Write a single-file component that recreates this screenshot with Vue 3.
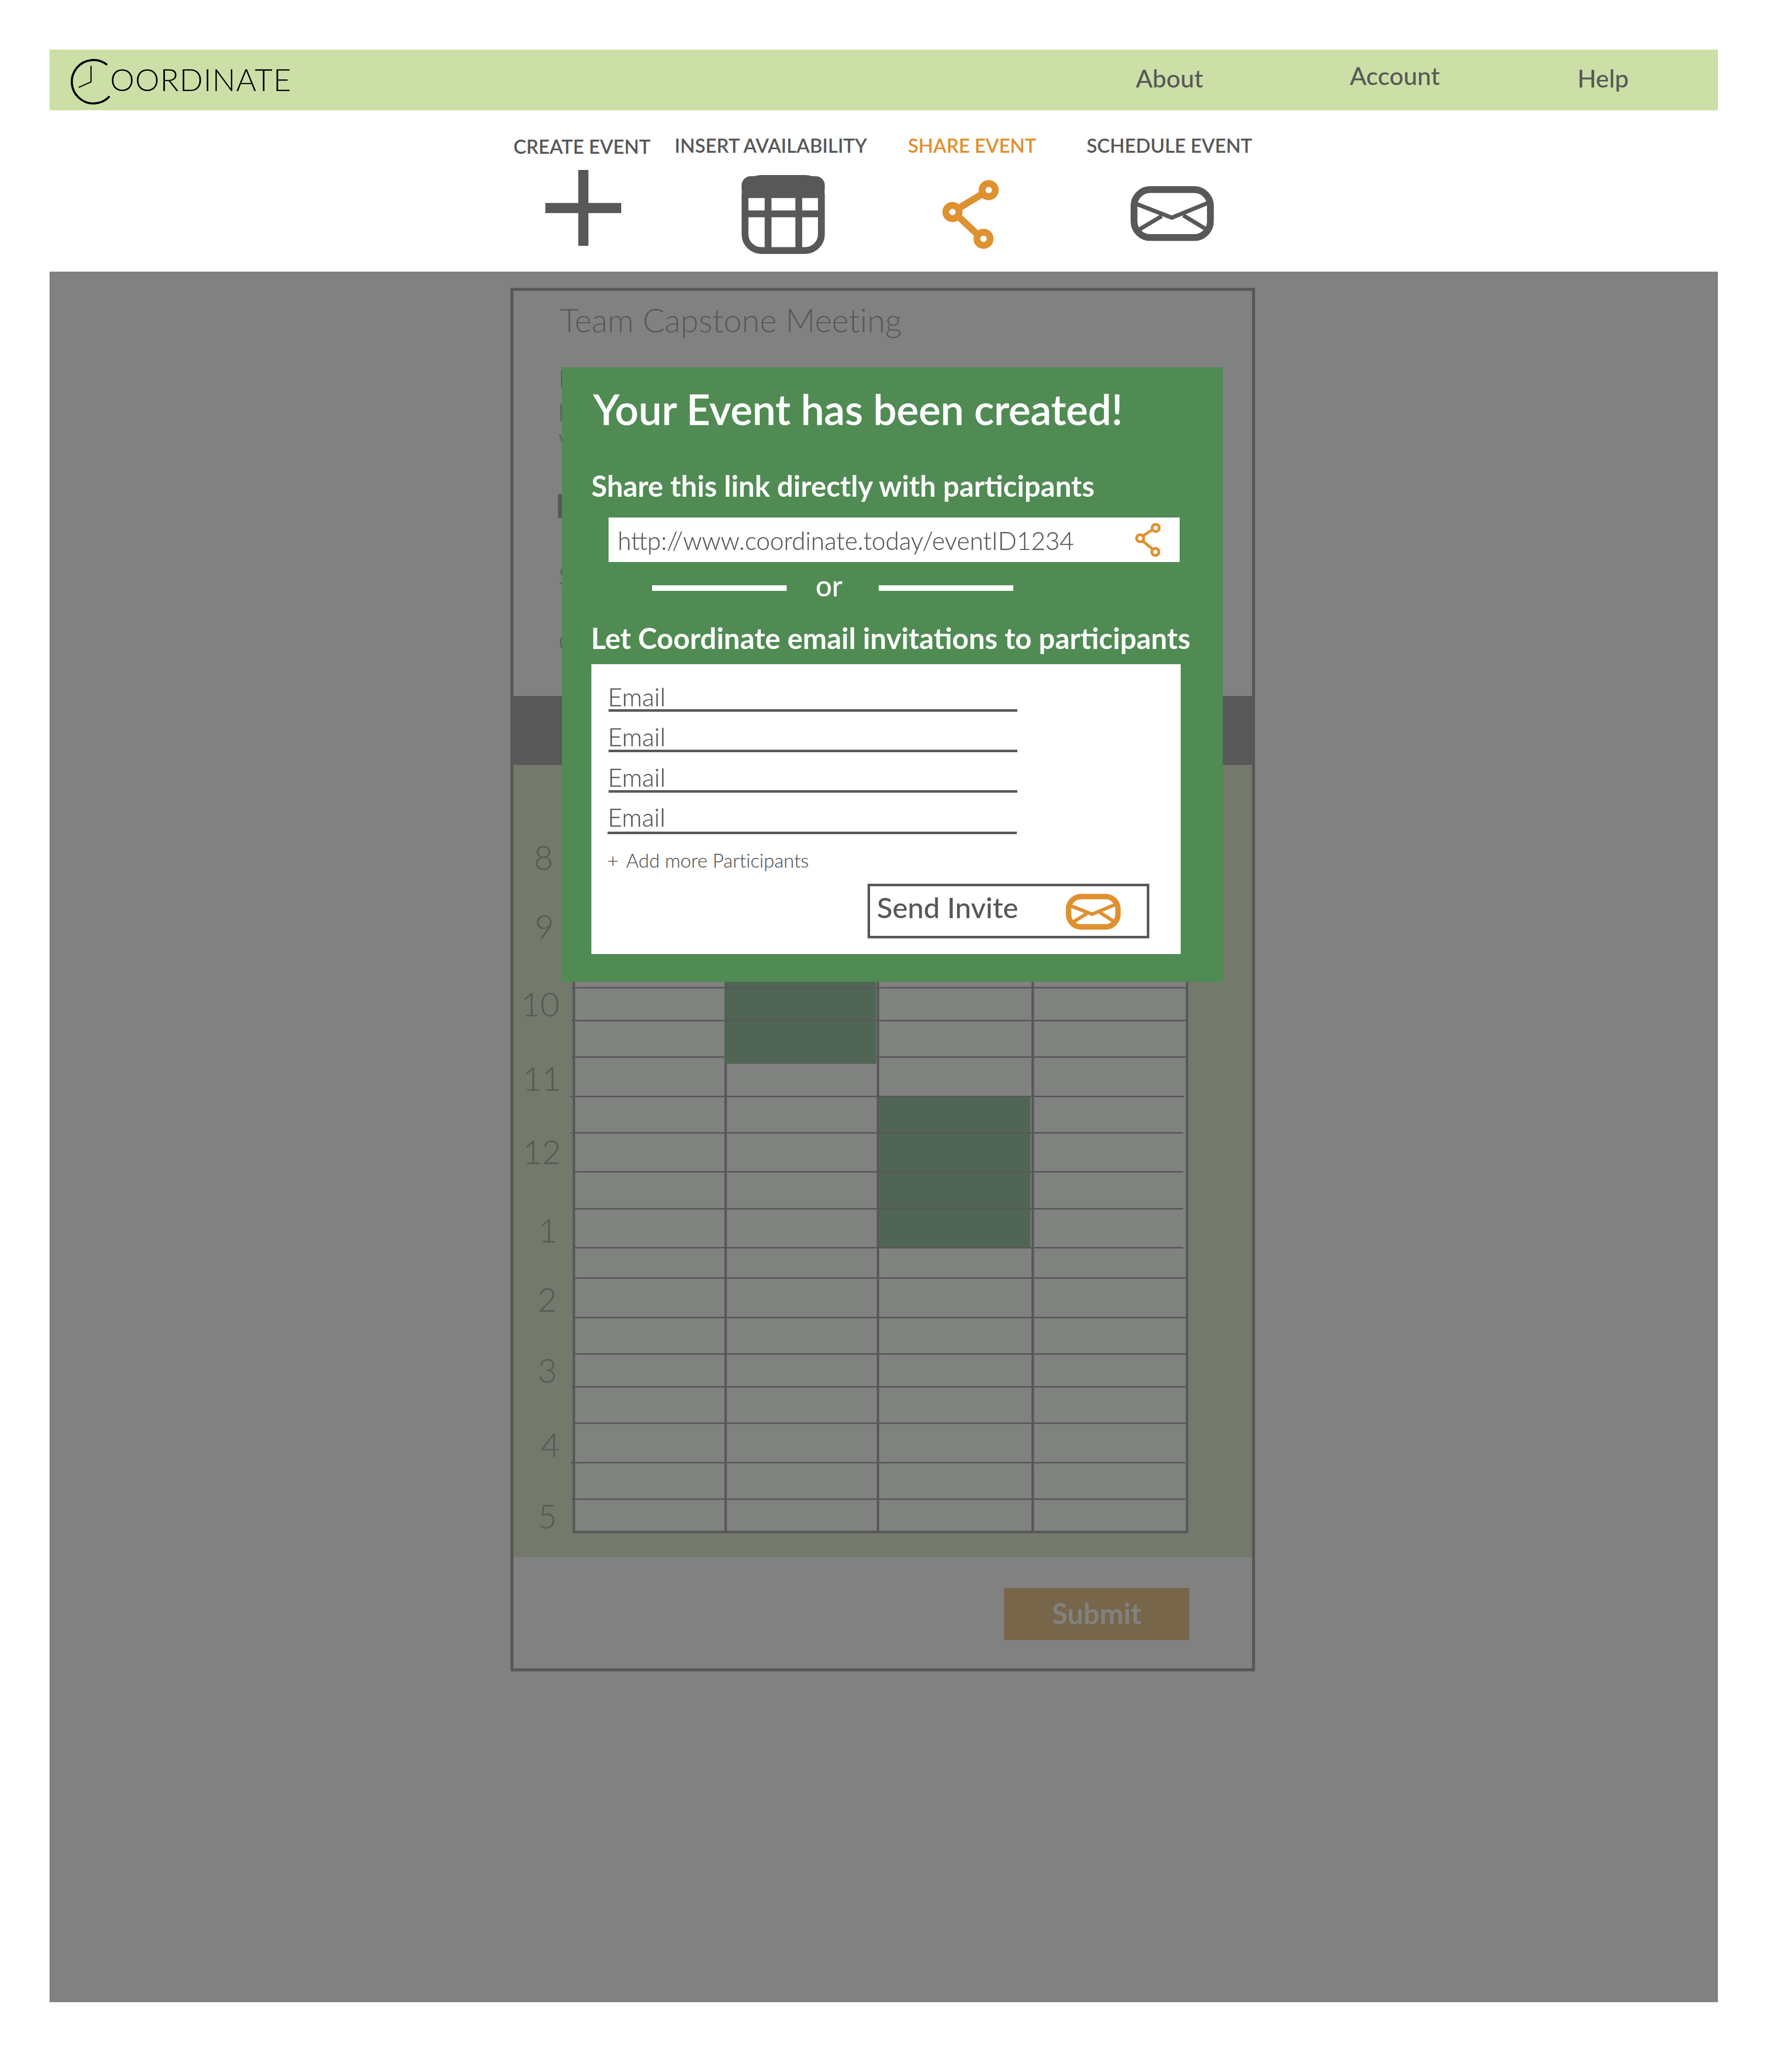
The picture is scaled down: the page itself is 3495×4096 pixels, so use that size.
<script setup>
const nav = ['About', 'Account', 'Help']

const emails = ['Email', 'Email', 'Email', 'Email']

// Distances below are in hundredths of a rem.
const GRID_TOP = 2428
const GRID_LEFT = 1735
const GRID_RIGHT = 3576
const LINE = 4.6
const SCHEDULE_TOP = 2306
const SCHEDULE_LEFT = 1549.4
const HOUR_SIZE = 100

const rem = (n) => `${(n / 100).toFixed(4)}rem`

const lines = [
  { y: 2979, from: 1724.7, to: 3576 },
  { y: 3078, from: 1723, to: 3576 },
  { y: 3188, from: 1724.7, to: 3576, under: true },
  { y: 3306.4, from: 1720.5, to: 3571.5 },
  { y: 3417.2, from: 1722, to: 3569 },
  { y: 3535.2, from: 1735, to: 3569 },
  { y: 3645.5, from: 1735, to: 3569 },
  { y: 3764, from: 1735, to: 3569 },
  { y: 3854.6, from: 1735, to: 3576 },
  { y: 3973.4, from: 1735, to: 3576 },
  { y: 4083.8, from: 1735, to: 3576 },
  { y: 4182.9, from: 1724.7, to: 3576 },
  { y: 4292.7, from: 1735, to: 3576 },
  { y: 4411.4, from: 1722, to: 3574 },
  { y: 4521.7, from: 1723, to: 3575 },
]
const rows = lines.map((l, i) => ({
  under: l.under,
  style: {
    height: rem(l.y - (i ? lines[i - 1].y : GRID_TOP - LINE / 2)),
    marginLeft: rem(l.from - GRID_LEFT),
    marginRight: rem(GRID_RIGHT - l.to),
  },
}))

const hourMarks = [
  { label: '8', x: 1611, base: 2622.5 },
  { label: '9', x: 1613.5, base: 2832.5 },
  { label: '10', x: 1572, base: 3065.5 },
  { label: '11', x: 1577, base: 3290 },
  { label: '12', x: 1577, base: 3510.5 },
  { label: '1', x: 1624.5, base: 3747 },
  { label: '2', x: 1622, base: 3956.2 },
  { label: '3', x: 1622.5, base: 4169.7 },
  { label: '4', x: 1632, base: 4394 },
  { label: '5', x: 1622.5, base: 4610 },
]
const hours = hourMarks.map((h, i) => ({
  label: h.label,
  style: {
    marginTop: rem(i ? h.base - hourMarks[i - 1].base - HOUR_SIZE : h.base - 88.7 - SCHEDULE_TOP),
    marginLeft: rem(h.x - SCHEDULE_LEFT),
  },
}))
</script>

<template>
  <div class="page">
    <header class="header">
      <svg class="logo-mark" viewBox="0 0 182 183" fill="none" stroke="#000">
        <path d="M173.5 46 A65.5 65.5 0 1 0 181 141" stroke-width="6.4" />
        <path d="M125 49 V98" stroke-width="3.6" />
        <path d="M126.5 97 L88 114" stroke-width="3.4" />
      </svg>
      <div class="logo-text">OORDINATE</div>
      <nav class="nav">
        <a v-for="item in nav" :key="item" class="nav-item">{{ item }}</a>
      </nav>
    </header>

    <div class="toolbar">
      <div class="tab tab-create">
        <div class="tab-label">CREATE EVENT</div>
        <svg class="tab-icon" viewBox="0 0 229 229">
          <path d="M99.4 0h30.6v99.4H229V130H130v99H99.4v-99H0V99.4h99.4z" fill="#585858" />
        </svg>
      </div>
      <div class="tab tab-insert">
        <div class="tab-label">INSERT AVAILABILITY</div>
        <svg class="tab-icon" viewBox="0 0 251 238" fill="none" stroke="#585858" stroke-width="20.6">
          <rect x="10.3" y="10.3" width="230.4" height="217.4" rx="49" />
          <path d="M79.9 60V225M172.5 60V225M10 117H241" />
          <path d="M28 3.3H223A28 28 0 0 1 251 31.3V40Q251 58 240 69.6H11Q0 58 0 40V31.3A28 28 0 0 1 28 3.3z" fill="#585858" stroke="none" />
        </svg>
      </div>
      <div class="tab tab-share">
        <div class="tab-label">SHARE EVENT</div>
        <svg class="tab-icon" viewBox="0 0 170 207.5" fill="none" stroke="#df902f" stroke-width="20.6">
          <circle cx="139.5" cy="30.3" r="20" />
          <circle cx="30.3" cy="96.3" r="20" />
          <circle cx="123.9" cy="177" r="20" />
          <path d="M47.5 86L122.5 40.5M44 106L109 167" />
        </svg>
      </div>
      <div class="tab tab-schedule">
        <div class="tab-label">SCHEDULE EVENT</div>
        <svg class="tab-icon" viewBox="0 0 251 165.3" fill="none" stroke="#585858">
          <rect x="10.3" y="10.3" width="230.4" height="144.7" rx="49" stroke-width="20.6" />
          <path d="M12 51.5L124.3 95L247 45M94 90L26 131M159 88L226 129" stroke-width="12.5" />
        </svg>
      </div>
    </div>

    <main class="stage">
      <section class="card">
        <div class="details">
          <h1 class="card-title">Team Capstone Meeting</h1>
          <p class="card-text">H<br />p<br />w</p>
          <h2 class="card-subtitle">D</h2>
          <p class="card-field">S</p>
          <p class="card-field card-field-last">C</p>
        </div>
        <div class="bar"></div>
        <div class="schedule">
          <div class="hours">
            <div v-for="h in hours" :key="h.label" class="hour" :style="h.style">{{ h.label }}</div>
          </div>
          <div class="grid">
            <div class="col"></div>
            <div class="col col-second"><div class="slot slot-morning"></div></div>
            <div class="col col-third"><div class="slot slot-noon"></div></div>
            <div class="col col-last"></div>
            <div class="lines">
              <div v-for="(r, i) in rows" :key="i" class="line" :class="{ under: r.under }" :style="r.style"></div>
            </div>
          </div>
        </div>
        <button class="submit">Submit</button>
      </section>

      <section class="modal">
        <h2 class="modal-title">Your Event has been created!</h2>
        <h3 class="modal-heading">Share this link directly with participants</h3>
        <div class="link-box">
          <span class="link-text">http://www.coordinate.today/eventID1234</span>
          <svg class="link-icon" viewBox="0 0 77 102" fill="none" stroke="#df902f" stroke-width="8.4">
            <circle cx="62" cy="14.6" r="10.8" />
            <circle cx="15" cy="45.8" r="10.8" />
            <circle cx="61" cy="87" r="10.8" />
            <path d="M24 38.5L53 19M22 53.5L53 79" />
          </svg>
        </div>
        <div class="or-row">
          <span class="rule"></span>
          <span class="or">or</span>
          <span class="rule"></span>
        </div>
        <h3 class="modal-heading modal-heading-email">Let Coordinate email invitations to participants</h3>
        <div class="panel">
          <div v-for="(e, i) in emails" :key="i" class="email">{{ e }}</div>
          <div class="add"><span class="add-plus">+</span><span>Add more Participants</span></div>
          <button class="send">
            <span class="send-text">Send Invite</span>
            <svg class="send-icon" viewBox="0 0 165.4 108" fill="none" stroke="#df902f">
              <rect x="8.2" y="8.2" width="149" height="91.6" rx="38" stroke-width="16.4" />
              <path d="M12 35L79 61.5L152 31M64 59L24 84M100 54L144 83" stroke-width="10.5" />
            </svg>
          </button>
        </div>
      </section>
    </main>
  </div>
</template>

<style>
html {
  font-size: 65.536px;
}
body {
  margin: 0;
  background: #fff;
}
</style>

<style scoped>
.page {
  box-sizing: border-box;
  width: 53.33rem;
  height: 62.5rem;
  padding: 1.5rem 1.504rem 0 1.5rem;
  overflow: hidden;
  background: #fff;
  color: #585858;
  font-family: Lato, "Open Sans", sans-serif;
  line-height: 1;
  white-space: nowrap;
}
h1, h2, h3, p {
  margin: 0;
  font-weight: 300;
}
svg {
  display: block;
  flex: none;
  overflow: visible;
}
button {
  display: flex;
  box-sizing: border-box;
  margin: 0;
  padding: 0;
  border: 0;
  border-radius: 0;
  font: inherit;
  line-height: 1;
  color: inherit;
  align-items: flex-start;
}

.header {
  display: flex;
  align-items: flex-start;
  height: 1.83rem;
  background: #ccdfa7;
}
.logo-mark {
  width: 1.82rem;
  height: 1.83rem;
}
.logo-text {
  margin-top: 0.442rem;
  font-size: 0.93rem;
  font-weight: 300;
  letter-spacing: 0.019rem;
  color: #000;
}
.nav {
  display: grid;
  grid-template-columns: 6.456rem 6.866rem auto;
  width: 17.568rem;
  margin-left: auto;
}
.nav-item {
  margin-top: 0.488rem;
  font-size: 0.745rem;
  font-weight: 500;
}
.nav-item:nth-child(2) {
  margin-top: 0.408rem;
}

.toolbar {
  display: flex;
  box-sizing: border-box;
  height: 4.867rem;
  padding-left: 13.987rem;
}
.tab-label {
  font-size: 0.583rem;
  font-weight: 600;
  letter-spacing: -0.0008rem;
}
.tab-create { width: 4.862rem; padding-top: 0.793rem; }
.tab-insert { width: 7.037rem; padding-top: 0.763rem; }
.tab-share { width: 5.389rem; padding-top: 0.753rem; color: #df902f; }
.tab-schedule { padding-top: 0.753rem; }
.tab-create .tab-icon { width: 2.29rem; height: 2.29rem; margin: 0.417rem 0 0 0.957rem; }
.tab-insert .tab-icon { width: 2.51rem; height: 2.38rem; margin: 0.601rem 0 0 2.021rem; }
.tab-share .tab-icon { width: 1.7rem; height: 2.075rem; margin: 0.764rem 0 0 1.045rem; }
.tab-schedule .tab-icon { width: 2.51rem; height: 1.653rem; margin: 0.944rem 0 0 1.325rem; }

.stage {
  position: relative;
  box-sizing: border-box;
  height: 52.193rem;
  padding: 0.483rem 0 0 13.9rem;
  background: #818181;
}
.card {
  box-sizing: border-box;
  width: 22.455rem;
  height: 41.74rem;
  border: 0.0916rem solid #585858;
}
.details {
  display: flow-root;
  height: 12.227rem;
}
.card-title {
  margin: 0.386rem 0 0 1.396rem;
  font-size: 0.985rem;
  font-variant-ligatures: none;
}
.card-text {
  margin: 0.807rem 0 0 1.356rem;
  font-size: 0.746rem;
  font-weight: 300;
  line-height: 0.897rem;
}
.card-subtitle {
  margin: 1.099rem 0 0 1.258rem;
  font-size: 1rem;
  font-weight: 700;
}
.card-field {
  margin: 1.252rem 0 0 1.356rem;
  font-size: 0.75rem;
}
.card-field-last {
  margin-top: 1.246rem;
}
.bar {
  height: 2.067rem;
  background: #585858;
}
.schedule {
  display: flex;
  height: 23.896rem;
  background: #73796b;
}
.hours {
  display: flow-root;
  width: 1.779rem;
}
.hour {
  font-size: 1rem;
  font-weight: 300;
  -webkit-text-stroke: 0.2px #585858;
}
.grid {
  position: relative;
  display: flex;
  box-sizing: border-box;
  width: 18.57rem;
  height: 22.044rem;
  margin-top: 1.142rem;
  border: 0.08rem solid #585858;
  background: #808280;
}
.col {
  display: flow-root;
  box-sizing: border-box;
  width: 4.583rem;
  border-right: 0.08rem solid #585858;
}
.col-third {
  width: 4.67rem;
}
.col-last {
  flex: 1;
  border-right: 0;
}
.slot {
  position: relative;
  z-index: 2;
  background: #506555;
}
.slot-morning {
  width: 4.576rem;
  height: 7.807rem;
  margin-left: -0.077rem;
}
.slot-noon {
  width: 4.577rem;
  height: 4.543rem;
  margin-top: 8.807rem;
}
.lines {
  position: absolute;
  inset: 0;
}
.line {
  position: relative;
  z-index: 3;
  box-sizing: border-box;
  border-bottom: 0.046rem solid #585858;
}
.line.under {
  z-index: 1;
}
.submit {
  width: 5.587rem;
  height: 1.56rem;
  margin: 0.943rem 0 0 14.799rem;
  padding: 0.333rem 0 0 1.437rem;
  background: #78664a;
  color: #808280;
  font-size: 0.862rem;
  font-weight: 700;
}

.modal {
  position: absolute;
  z-index: 5;
  top: 2.888rem;
  left: 15.448rem;
  display: flow-root;
  width: 19.938rem;
  height: 18.53rem;
  background: #4f8b52;
  color: #fdfdfd;
}
.modal-title {
  margin: 0.628rem 0 0 0.944rem;
  font-size: 1.249rem;
  font-weight: 600;
  -webkit-text-stroke: 0.4px #fdfdfd;
}
.modal-heading {
  margin: 1.259rem 0 0 0.888rem;
  font-size: 0.867rem;
  font-weight: 700;
}
.link-box {
  display: flex;
  align-items: flex-start;
  width: 17.23rem;
  height: 1.346rem;
  margin: 0.52rem 0 0 1.402rem;
  background: #fff;
  color: #585858;
}
.link-text {
  margin: 0.323rem 0 0 0.28rem;
  font-size: 0.7445rem;
  font-weight: 300;
  -webkit-text-stroke: 0.3px #585858;
}
.link-icon {
  width: 0.77rem;
  height: 1.02rem;
  margin: 0.168rem 0.575rem 0 auto;
}
.or-row {
  display: flex;
  height: 0.87rem;
  margin: 0.255rem 0 0 2.72rem;
}
.rule {
  width: 4.06rem;
  height: 0.165rem;
  margin-top: 0.443rem;
  background: #fff;
}
.or {
  box-sizing: border-box;
  width: 2.771rem;
  padding: 0.014rem 0 0 0.872rem;
  font-size: 0.87rem;
  font-weight: 500;
}
.modal-heading-email {
  margin: 0.733rem 0 0 0.877rem;
  font-size: 0.868rem;
}
.panel {
  display: flow-root;
  width: 17.781rem;
  height: 8.755rem;
  margin: 0.35rem 0 0 0.887rem;
  background: #fff;
  color: #585858;
}
.email {
  box-sizing: border-box;
  width: 12.34rem;
  height: 0.848rem;
  margin: 0.362rem 0 0 0.515rem;
  padding-top: 0.005rem;
  border-bottom: 0.085rem solid #585858;
  font-size: 0.75rem;
  font-weight: 300;
  letter-spacing: 0.004rem;
  line-height: 0.755rem;
  text-indent: -0.012rem;
  -webkit-text-stroke: 0.4px #585858;
}
.email:nth-child(1) { margin-top: 0.592rem; }
.email:nth-child(2) { height: 0.855rem; }
.email:nth-child(3) { height: 0.868rem; }
.email:nth-child(4) { height: 0.897rem; margin-top: 0.348rem; margin-left: 0.498rem; text-indent: 0; }
.add {
  display: flex;
  margin: 0.489rem 0 0 0.485rem;
  font-size: 0.58rem;
  font-weight: 300;
  font-variant-ligatures: none;
  -webkit-text-stroke: 0.3px #585858;
}
.add-plus {
  width: 0.568rem;
}
.send {
  width: 8.494rem;
  height: 1.647rem;
  margin: 0.424rem 0 0 8.335rem;
  border: 0.084rem solid #585858;
  background: #fff;
}
.send-text {
  margin: 0.196rem 0 0 0.204rem;
  font-size: 0.867rem;
  font-weight: 500;
}
.send-icon {
  width: 1.654rem;
  height: 1.08rem;
  margin: 0.232rem 0.78rem 0 auto;
}
</style>
